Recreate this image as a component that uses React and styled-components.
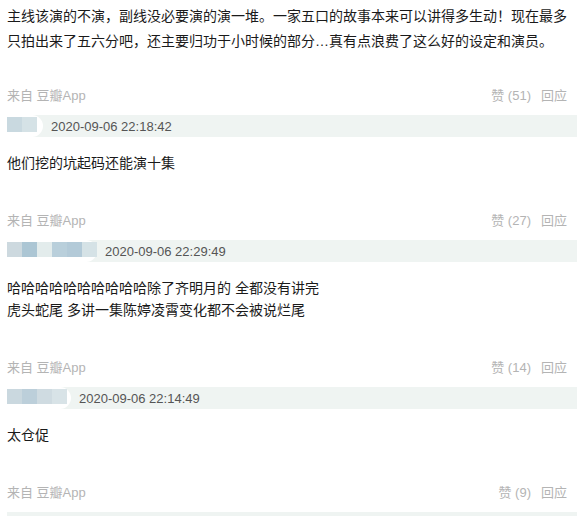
import React from "react";
import styled, { createGlobalStyle } from "styled-components";

const comments = [
  {
    blocks: ["#c9d9e0", "#d5e2e6"],
    blobWidth: 43,
    time: "2020-09-06 22:18:42",
    lines: ["他们挖的坑起码还能演十集"],
    likes: 27,
  },
  {
    blocks: ["#cdd9df", "#acc6d4", "#e3ecec", "#b9cfdb", "#b3cad8", "#d5e2e6"],
    blobWidth: 97,
    time: "2020-09-06 22:29:49",
    lines: [
      "哈哈哈哈哈哈哈哈哈哈除了齐明月的 全都没有讲完",
      "虎头蛇尾 多讲一集陈婷凌霄变化都不会被说烂尾",
    ],
    likes: 14,
  },
  {
    blocks: ["#cad8df", "#bccfda", "#cfdbe1", "#d8e3e7"],
    blobWidth: 71,
    time: "2020-09-06 22:14:49",
    lines: ["太仓促"],
    likes: 9,
  },
];

export default function App() {
  return (
    <>
      <GlobalStyle />
      <Page>
        <Text $loose>
          主线该演的不演，副线没必要演的演一堆。一家五口的故事本来可以讲得多生动！现在最多只拍出来了五六分吧，还主要归功于小时候的部分…真有点浪费了这么好的设定和演员。
        </Text>
        <Footer likes={51} $first />
        {comments.map((c) => (
          <Comment key={c.time}>
            <Header>
              <Censor $width={c.blobWidth}>
                {c.blocks.map((color, i) => (
                  <Pixel key={i} $color={color} />
                ))}
              </Censor>
              <Time>{c.time}</Time>
            </Header>
            <Text>
              {c.lines.map((line, i) => (
                <React.Fragment key={i}>
                  {i > 0 && <br />}
                  {line}
                </React.Fragment>
              ))}
            </Text>
            <Footer likes={c.likes} />
          </Comment>
        ))}
        <Comment>
          <Header />
        </Comment>
      </Page>
    </>
  );
}

function Footer({ likes, $first }) {
  return (
    <Meta $first={$first}>
      <span>来自 豆瓣App</span>
      <Actions>
        <span>赞 ({likes})</span>
        <span>回应</span>
      </Actions>
    </Meta>
  );
}

const GlobalStyle = createGlobalStyle`
  body {
    margin: 0;
    background: #fff;
    font-family: "Liberation Sans", Arial, "Noto Sans CJK SC", sans-serif;
    font-size: 13px;
    color: #222;
    overflow: hidden;
  }
`;

const Page = styled.main`
  width: 577px;
  height: 516px;
  overflow: hidden;
  padding: 4px 0 0 7px;
  box-sizing: border-box;
`;

const Text = styled.p`
  margin: 0 10px 0 0;
  font-size: 14px;
  line-height: ${({ $loose }) => ($loose ? "25px" : "22px")};
  color: #1a1a1a;
`;

const Meta = styled.div`
  display: flex;
  justify-content: space-between;
  align-items: center;
  height: 20px;
  line-height: 20px;
  margin-top: ${({ $first }) => ($first ? "32px" : "37px")};
  padding-right: 10px;
  color: #b4b4b4;
`;

const Actions = styled.div`
  display: flex;
  gap: 10px;
`;

const Comment = styled.section`
  margin-top: 9px;
`;

const Header = styled.div`
  display: flex;
  align-items: center;
  height: 22px;
  background: #eff4f2;
  margin-bottom: 15px;
`;

const Censor = styled.div`
  display: flex;
  align-self: stretch;
  align-items: flex-start;
  padding-top: 2px;
  width: ${({ $width }) => $width - 7}px;
  box-sizing: border-box;
  background: #fff;
  border-radius: 0 14px 14px 0;
`;

const Pixel = styled.span`
  width: 15px;
  height: 15px;
  flex: none;
  background: ${({ $color }) => $color};
`;

const Time = styled.span`
  margin-left: 8px;
  color: #555;
`;
